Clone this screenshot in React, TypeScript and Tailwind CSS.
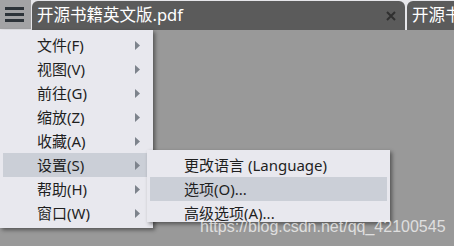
import React from 'react';

const font = { fontFamily: '"Noto Sans", "Noto Sans CJK SC", sans-serif' };

const menuItems = ['文件(F)', '视图(V)', '前往(G)', '缩放(Z)', '收藏(A)', '设置(S)', '帮助(H)', '窗口(W)'];
const subItems = ['更改语言 (Language)', '选项(O)...', '高级选项(A)...'];

const Arrow = () => (
  <svg width="5" height="9" viewBox="0 0 5 9" className="absolute left-[132px] top-[8px]">
    <path d="M0 0 L5 4.5 L0 9 Z" fill="#7d838c" />
  </svg>
);

const App: React.FC = () => {
  return (
    <div className="w-[454px] h-[246px] flex flex-col overflow-hidden bg-[#999999]" style={font}>
      {/* Top bar */}
      <div className="h-[30px] flex bg-[#e6e6ea] shrink-0">
        <div className="w-[31px] h-[29px] bg-[#a3a3a5] flex flex-col items-center justify-center gap-[3px] pr-[2px]">
          <div className="w-[19px] h-[3px] bg-[#2d3339]" />
          <div className="w-[19px] h-[3px] bg-[#2d3339]" />
          <div className="w-[19px] h-[3px] bg-[#2d3339]" />
        </div>
        <div className="ml-[1px] mt-[1px] w-[373px] h-[29px] bg-[#5b5b5b] rounded-t-[6px] flex items-center pl-[5px] pr-[9px]">
          <span className="text-white text-[16.5px] leading-none flex-1 pb-[1px]">开源书籍英文版.pdf</span>
          <svg width="10" height="10" viewBox="0 0 10 10">
            <path d="M1 1 L9 9 M9 1 L1 9" stroke="#2f2f2f" strokeWidth="2" />
          </svg>
        </div>
        <div className="ml-[2px] mt-[1px] flex-1 h-[29px] bg-[#5b5b5b] rounded-tl-[6px] flex items-center pl-[5px] overflow-hidden">
          <span className="text-white text-[16.5px] leading-none whitespace-nowrap pb-[1px]">开源书籍英文版.pdf</span>
        </div>
      </div>

      {/* Body */}
      <div className="relative flex-1">
        <div className="absolute left-0 top-0 w-[153px] bg-[#e8e8ee] pt-[3px] pb-[3px] pl-[3px] shadow-[2px_2px_4px_rgba(0,0,0,0.45)]">
          {menuItems.map((item) => (
            <div
              key={item}
              className={`relative w-[144px] h-[24px] flex items-center pl-[34px] text-[15px] text-[#1f1f1f] ${item === '设置(S)' ? 'bg-[#cbcfd7]' : ''}`}
            >
              {item}
              <Arrow />
            </div>
          ))}
        </div>

        <div className="absolute left-[147px] top-[120px] w-[243px] h-[72px] overflow-hidden bg-[#e8e8ee] pt-[3px] pl-[3px] shadow-[2px_2px_4px_rgba(0,0,0,0.45)]">
          {subItems.map((item) => (
            <div
              key={item}
              className={`w-[237px] h-[24px] flex items-center pl-[34px] text-[15px] leading-none text-[#1f1f1f] ${item === '选项(O)...' ? 'bg-[#cbcfd7]' : ''}`}
            >
              {item}
            </div>
          ))}
        </div>

        <div
          className="absolute left-[200px] top-[189px] text-[16px] text-white/70 whitespace-nowrap leading-none"
          style={{ fontFamily: '"Liberation Sans", Arial, sans-serif' }}
        >
          https://blog.csdn.net/qq_42100545
        </div>
      </div>
    </div>
  );
};

export default App;
